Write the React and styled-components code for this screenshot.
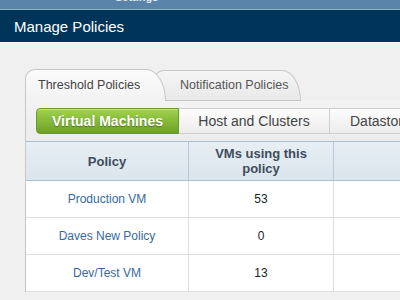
import React from "react";
import styled, { createGlobalStyle } from "styled-components";

const GlobalStyle = createGlobalStyle`
  html, body {
    margin: 0;
    padding: 0;
    width: 400px;
    height: 300px;
    overflow: hidden;
    background: #f0f0f0;
    font-family: "Liberation Sans", Arial, sans-serif;
  }
`;

const TopStrip = styled.div`
  height: 9px;
  background: #5a83a9;
  border-bottom: 1px solid #8fb0c9;
  overflow: hidden;
`;

const StripText = styled.span`
  display: block;
  margin-left: 115px;
  margin-top: -9px;
  font-size: 11px;
  font-weight: bold;
  color: #dfe8f0;
  line-height: 12px;
`;

const TitleBar = styled.div`
  height: 32px;
  background: #013459;
  border-bottom: 1px solid #ffffff;
  display: flex;
  align-items: center;
  padding-left: 14px;
  color: #ffffff;
  font-size: 15px;
`;

const Content = styled.div`
  padding: 26px 0 0 25px;
`;

const Tabs = styled.div`
  display: flex;
  height: 32px;
  align-items: flex-end;
`;

const Tab = styled.div`
  position: relative;
  height: ${(p) => (p.$active ? "32px" : "31px")};
  box-sizing: border-box;
  width: ${(p) => p.$width}px;
  margin-left: ${(p) => (p.$active ? 0 : -12)}px;
  padding-left: ${(p) => p.$pad}px;
  padding-bottom: 1px;
  display: flex;
  align-items: center;
  font-size: 12.5px;
  color: ${(p) => (p.$active ? "#444" : "#555")};
  background: ${(p) =>
    p.$active
      ? "linear-gradient(#fbfbfb, #f2f2f2)"
      : "linear-gradient(#f5f5f5, #e9e9e9)"};
  border: 1px solid #c6c6c6;
  border-bottom: ${(p) => (p.$active ? "none" : "1px solid #c6c6c6")};
  border-radius: 10px 20px 0 0 / 10px 32px 0 0;
  z-index: ${(p) => (p.$active ? 2 : 1)};
`;

const Panel = styled.div`
  width: 420px;
  background: linear-gradient(#f3f3f3, #ececec 40px);
  border-left: 1px solid #c6c6c6;
  margin-top: -1px;
  position: relative;
  z-index: 0;
`;

const Segments = styled.div`
  display: flex;
  padding: 8px 0 7px 10px;
`;

const Segment = styled.div`
  height: 26px;
  box-sizing: border-box;
  width: ${(p) => p.$width}px;
  flex-shrink: 0;
  display: flex;
  align-items: center;
  justify-content: ${(p) => (p.$left ? "flex-start" : "center")};
  padding-left: ${(p) => (p.$left ? 20 : 0)}px;
  font-size: 14px;
  white-space: nowrap;
  border: 1px solid ${(p) => (p.$selected ? "#6c9b2c" : "#cdcdcd")};
  border-left: ${(p) => (p.$first ? "" : "none")};
  border-radius: ${(p) => (p.$first ? "4px 0 0 4px" : "0")};
  color: ${(p) => (p.$selected ? "#fff" : "#444")};
  font-weight: ${(p) => (p.$selected ? "bold" : "normal")};
  text-shadow: ${(p) => (p.$selected ? "0 1px 1px rgba(50,80,10,0.6)" : "none")};
  background: ${(p) =>
    p.$selected
      ? "linear-gradient(#a3d150, #86ba38 50%, #6f9f2a)"
      : "linear-gradient(#fdfdfd, #ececec)"};
  box-shadow: ${(p) => (p.$selected ? "inset 0 1px 0 rgba(255,255,255,0.35)" : "none")};
`;

const Table = styled.div`
  background: #fff;
`;

const Row = styled.div`
  display: grid;
  grid-template-columns: 163px 145px 1fr;
  height: ${(p) => (p.$head ? 40 : 37)}px;
  box-sizing: border-box;
  background: ${(p) => (p.$head ? "linear-gradient(#e7eef4, #dbe5ed)" : "#fff")};
  border-top: ${(p) => (p.$head ? "1px solid #a9c0d3" : "none")};
  border-bottom: 1px solid ${(p) => (p.$head ? "#a9c0d3" : "#dedede")};
`;

const Cell = styled.div`
  display: flex;
  align-items: center;
  justify-content: center;
  text-align: center;
  border-right: 1px solid ${(p) => (p.$head ? "#b7c9d8" : "#dedede")};
  font-size: ${(p) => (p.$head ? 13 : 12)}px;
  line-height: 15px;
  font-weight: ${(p) => (p.$head ? "bold" : "normal")};
  color: ${(p) => (p.$head ? "#3e4c5c" : p.$link ? "#3669a3" : "#222")};
`;

const rows = [
  { name: "Production VM", count: 53 },
  { name: "Daves New Policy", count: 0 },
  { name: "Dev/Test VM", count: 13 },
];

export default function App() {
  return (
    <>
      <GlobalStyle />
      <TopStrip>
        <StripText>Settings</StripText>
      </TopStrip>
      <TitleBar>Manage Policies</TitleBar>
      <Content>
        <Tabs>
          <Tab $active $width={141} $pad={12}>
            Threshold Policies
          </Tab>
          <Tab $width={147} $pad={25}>
            Notification Policies
          </Tab>
        </Tabs>
        <Panel>
          <Segments>
            <Segment $selected $first $width={143}>
              Virtual Machines
            </Segment>
            <Segment $width={151}>Host and Clusters</Segment>
            <Segment $width={120} $left>
              Datastores
            </Segment>
          </Segments>
          <Table>
            <Row $head>
              <Cell $head>Policy</Cell>
              <Cell $head>
                VMs using this
                <br />
                policy
              </Cell>
              <Cell $head />
            </Row>
            {rows.map((r) => (
              <Row key={r.name}>
                <Cell $link>{r.name}</Cell>
                <Cell>{r.count}</Cell>
                <Cell />
              </Row>
            ))}
          </Table>
        </Panel>
      </Content>
    </>
  );
}
